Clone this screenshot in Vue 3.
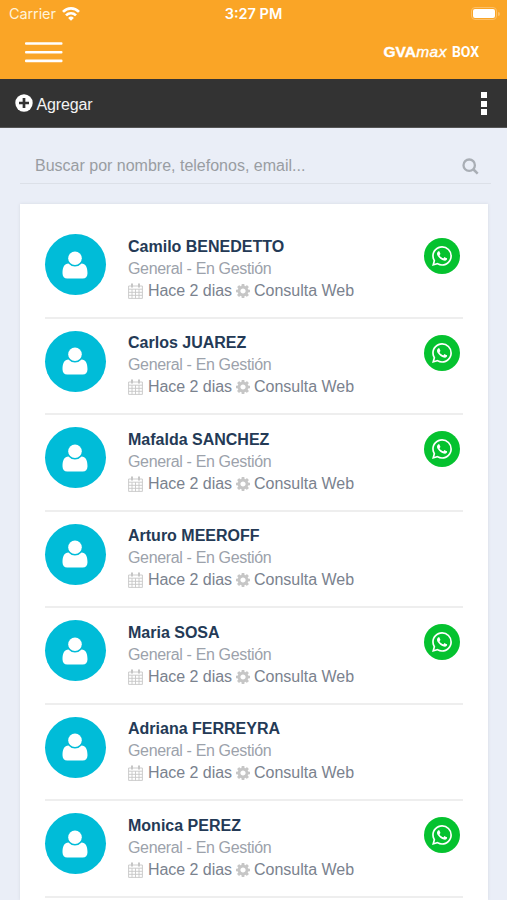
<script setup>
const contacts = [
  { name: 'Camilo BENEDETTO', whatsapp: true },
  { name: 'Carlos JUAREZ', whatsapp: true },
  { name: 'Mafalda SANCHEZ', whatsapp: true },
  { name: 'Arturo MEEROFF', whatsapp: false },
  { name: 'Maria SOSA', whatsapp: true },
  { name: 'Adriana FERREYRA', whatsapp: false },
  { name: 'Monica PEREZ', whatsapp: true },
]
</script>

<template>
  <div class="screen">
    <header class="top">
      <div class="status">
        <div class="carrier">
          <span>Carrier</span>
          <svg class="wifi" viewBox="0 0 18 14" fill="none" stroke="#fff" stroke-width="2.700">
            <path d="M1 4.900C5.600.3 12.400.3 17 4.900" />
            <path d="M4 8.400c2.900-2.800 7.100-2.800 10 0" />
            <path d="M9 13.800 6.100 10.900a4.200 4.200 0 0 1 5.800 0z" fill="#fff" stroke="none" />
          </svg>
        </div>
        <div class="clock">3:27 PM</div>
        <div class="battery"><span class="cell"><i></i></span><span class="nub"></span></div>
      </div>
      <div class="nav">
        <svg class="burger" viewBox="0 0 38 21" fill="#fff">
          <rect y="0.200" width="37.500" height="2.600" rx="1" />
          <rect y="8.900" width="37.500" height="2.600" rx="1" />
          <rect y="17.600" width="37.500" height="2.600" rx="1" />
        </svg>
        <div class="logo"><b class="gva">GVA</b><em>max</em><b class="box">BOX</b></div>
      </div>
    </header>

    <div class="toolbar">
      <div class="add">
        <svg viewBox="0 0 18 18">
          <circle cx="9" cy="9" r="8.700" fill="#fff" />
          <path d="M9 4v10M4 9h10" stroke="#333" stroke-width="2.700" />
        </svg>
        <span>Agregar</span>
      </div>
      <div class="dots"><i></i><i></i><i></i></div>
    </div>

    <div class="search">
      <span>Buscar por nombre, telefonos, email...</span>
      <svg viewBox="0 0 17 17" fill="none" stroke="#a9aeb5">
        <circle cx="7.200" cy="7.200" r="5.700" stroke-width="2.300" />
        <path d="m11.500 11.500 4.200 4.200" stroke-width="2.500" />
      </svg>
    </div>

    <main class="card">
      <div v-for="(c, i) in contacts" :key="i" class="row">
        <div class="avatar">
          <svg viewBox="0 0 26 28" fill="#fff">
            <path d="M6.400 12.600C2.500 12.800.5 16 .5 22.300c0 3.500 1.900 5.200 4.700 5.200h15.600c2.800 0 4.700-1.700 4.700-5.200 0-6.300-2-9.500-5.900-9.700a8.800 8.800 0 0 1-13.200 0z" />
            <circle cx="13" cy="7.200" r="6.800" />
          </svg>
        </div>
        <div class="info">
          <div class="name">{{ c.name }}</div>
          <div class="state">General - En Gestión</div>
          <div class="meta">
            <svg class="calendar" viewBox="0 0 15 16" fill="none" stroke="#c6c6c6">
              <path d="M.6 3h13.800v12.400H.6zM.6 6.200h13.800M.6 9.300h13.800M.6 12.300h13.800M4 6.200v9.200M7.500 6.200v9.200M11 6.200v9.200" stroke-width=".9" />
              <path d="M4 .5v4M11 .5v4" stroke-width="2" />
            </svg>
            <span class="when">Hace 2 dias</span>
            <svg class="cog" viewBox="0 128 1536 1536" fill="#c6c6c6">
              <path d="M1054 896q0-118-84-202t-202-84-202 84-84 202 84 202 202 84 202-84 84-202zm482-109v222q0 12-8 23t-20 13l-185 28q-19 54-39 91 35 50 107 138 10 12 10 25t-9 23q-27 37-99 108t-94 71q-12 0-26-9l-138-108q-44 23-91 38-16 136-29 186-7 28-36 28h-222q-14 0-24.500-8.500t-11.500-21.500l-28-184q-49-16-90-37l-141 107q-10 9-25 9-14 0-25-11-126-114-165-168-7-10-7-23 0-12 8-23 15-21 51-66.500t54-70.500q-27-50-41-99l-183-27q-13-2-21-12.500t-8-23.500v-222q0-12 8-23t19-13l186-28q14-46 39-92-40-57-107-138-10-12-10-24 0-10 9-23 26-36 98.500-107.500t94.500-71.500q13 0 26 10l138 107q44-23 91-38 16-136 29-186 7-28 36-28h222q14 0 24.500 8.500t11.500 21.500l28 184q49 16 90 37l142-107q9-9 24-9 13 0 25 10 129 119 165 170 7 8 7 22 0 12-8 23-15 21-51 66.500t-54 70.500q26 50 41 98l183 28q13 2 21 12.500t8 23.500z" />
            </svg>
            <span>Consulta Web</span>
          </div>
        </div>
        <div v-if="c.whatsapp" class="whatsapp">
          <svg viewBox="0 0 24 24" fill="#fff">
            <path d="M17.472 14.382c-.297-.149-1.758-.867-2.030-.967-.273-.099-.471-.148-.67.15-.197.297-.767.966-.94 1.164-.173.199-.347.223-.644.075-.297-.15-1.255-.463-2.390-1.475-.883-.788-1.480-1.761-1.653-2.059-.173-.297-.018-.458.13-.606.134-.133.298-.347.446-.52.149-.174.198-.298.298-.497.099-.198.05-.371-.025-.52-.075-.149-.669-1.612-.916-2.207-.242-.579-.487-.5-.669-.51-.173-.008-.371-.01-.57-.01-.198 0-.52.074-.792.372-.272.297-1.040 1.016-1.040 2.479 0 1.462 1.065 2.875 1.213 3.074.149.198 2.096 3.200 5.077 4.487.709.306 1.262.489 1.694.625.712.227 1.360.195 1.871.118.571-.085 1.758-.719 2.006-1.413.248-.694.248-1.289.173-1.413-.074-.124-.272-.198-.57-.347m-5.421 7.403h-.004a9.870 9.870 0 0 1-5.031-1.378l-.361-.214-3.741.982.998-3.648-.235-.374a9.860 9.860 0 0 1-1.510-5.260c.001-5.450 4.436-9.884 9.888-9.884 2.640 0 5.122 1.030 6.988 2.898a9.825 9.825 0 0 1 2.893 6.994c-.003 5.450-4.437 9.884-9.885 9.884m8.413-18.297A11.815 11.815 0 0 0 12.050 0C5.495 0 .16 5.335.157 11.892c0 2.096.547 4.142 1.588 5.945L.057 24l6.305-1.654a11.882 11.882 0 0 0 5.683 1.448h.005c6.554 0 11.890-5.335 11.893-11.893a11.821 11.821 0 0 0-3.480-8.413z" />
          </svg>
        </div>
      </div>
    </main>
  </div>
</template>

<style>
body {
  margin: 0;
  overflow: hidden;
}
</style>

<style scoped>
.screen {
  display: flex;
  flex-direction: column;
  box-sizing: border-box;
  width: 507px;
  height: 900px;
  overflow: hidden;
  background: #eaeef7;
  font-family: "Liberation Sans", Arial, sans-serif;
  font-size: 16px;
}
svg {
  display: block;
  flex: none;
}
.top {
  flex: none;
  height: 79px;
  background: #faa526;
  color: #fff;
}
.status {
  display: grid;
  grid-template-columns: 1fr auto 1fr;
  align-items: center;
  height: 27px;
  padding: 0 7px 0 9px;
  font-family: Inter, sans-serif;
  font-size: 14.5px;
}
.carrier {
  display: flex;
  align-items: center;
  gap: 6px;
  color: #fff3d9;
  letter-spacing: -0.100px;
}
.wifi {
  width: 18px;
  height: 14px;
}
.clock {
  margin-right: 2px;
  font-weight: 600;
}
.battery {
  display: flex;
  align-items: center;
  justify-content: flex-end;
  gap: 1px;
}
.cell {
  box-sizing: border-box;
  width: 26px;
  height: 13px;
  padding: 1px;
  border: 1px solid #fcc068;
  border-radius: 4px;
}
.cell i {
  display: block;
  height: 9px;
  border-radius: 2px;
  background: #fff;
}
.nub {
  width: 2px;
  height: 4px;
  border-radius: 0 2px 2px 0;
  background: #fcc068;
}
.nav {
  display: flex;
  justify-content: space-between;
  align-items: center;
  height: 50px;
  padding: 0 27px 0 25px;
}
.burger {
  width: 38px;
  height: 21px;
}
.logo {
  display: flex;
  align-items: baseline;
  line-height: 20px;
}
.gva {
  font-size: 15.500px;
  font-weight: 700;
  letter-spacing: 0.100px;
  -webkit-text-stroke: 0.400px #fff;
}
.logo em {
  font-size: 15.500px;
  letter-spacing: 0.500px;
  -webkit-text-stroke: 0.400px #fff;
}
.box {
  margin-left: 5px;
  padding-right: 1px;
  font-family: Roboto, sans-serif;
  font-size: 14px;
  font-weight: 700;
  letter-spacing: -0.100px;
}
.toolbar {
  display: flex;
  flex: none;
  justify-content: space-between;
  align-items: center;
  box-sizing: border-box;
  height: 49px;
  padding: 0 20px 0 15px;
  background: #333;
  border-bottom: 1px solid #555;
  color: #f4f4f4;
}
.add {
  display: flex;
  align-items: center;
  gap: 3.500px;
}
.add span {
  padding-top: 3px;
  letter-spacing: -0.150px;
}
.add svg {
  width: 18px;
  height: 18px;
  margin-bottom: 1px;
}
.dots {
  display: flex;
  flex-direction: column;
  gap: 2.500px;
  padding-top: 1px;
}
.dots i {
  width: 6px;
  height: 6px;
  background: #fff;
}
.search {
  display: flex;
  flex: none;
  justify-content: space-between;
  align-items: center;
  box-sizing: border-box;
  height: 37px;
  margin: 19px 16px 0 20px;
  padding: 0 12px 0 15px;
  border-bottom: 1px solid #dce0e8;
  color: #999da2;
}
.search span {
  padding-top: 2px;
}
.search svg {
  width: 17px;
  height: 17px;
  margin-top: 3px;
}
.card {
  flex: 1 0 auto;
  box-sizing: border-box;
  margin: 20px 19px 0 20px;
  padding: 18px 25px 0;
  background: #fff;
  box-shadow: 0 0 3px #d5d9e2;
}
.row {
  display: flex;
  box-sizing: border-box;
  height: 96.500px;
  padding-top: 12px;
  border-bottom: 2px solid #eee;
}
.avatar {
  display: flex;
  flex: none;
  justify-content: center;
  align-items: center;
  width: 61px;
  height: 61px;
  margin-right: 22px;
  border-radius: 50%;
  background: #00bcd8;
}
.avatar svg {
  width: 26px;
  height: 28px;
  margin-right: 1px;
}
.info {
  flex: 1;
  padding-top: 1.500px;
  color: #7a828e;
  line-height: 22px;
}
.name {
  color: #243a56;
  font-weight: 700;
}
.state {
  color: #9ca2ab;
  letter-spacing: -0.350px;
}
.meta {
  display: flex;
  align-items: center;
}
.calendar {
  width: 15px;
  height: 16px;
  margin-right: 5px;
}
.when {
  margin-right: 4px;
  letter-spacing: -0.050px;
}
.cog {
  width: 14px;
  height: 14px;
  margin-right: 4px;
}
.whatsapp {
  display: flex;
  flex: none;
  justify-content: center;
  align-items: center;
  width: 36px;
  height: 36px;
  margin: 4px 3px 0 0;
  border-radius: 50%;
  background: #05c22f;
}
.whatsapp svg {
  width: 20px;
  height: 20px;
}
</style>
